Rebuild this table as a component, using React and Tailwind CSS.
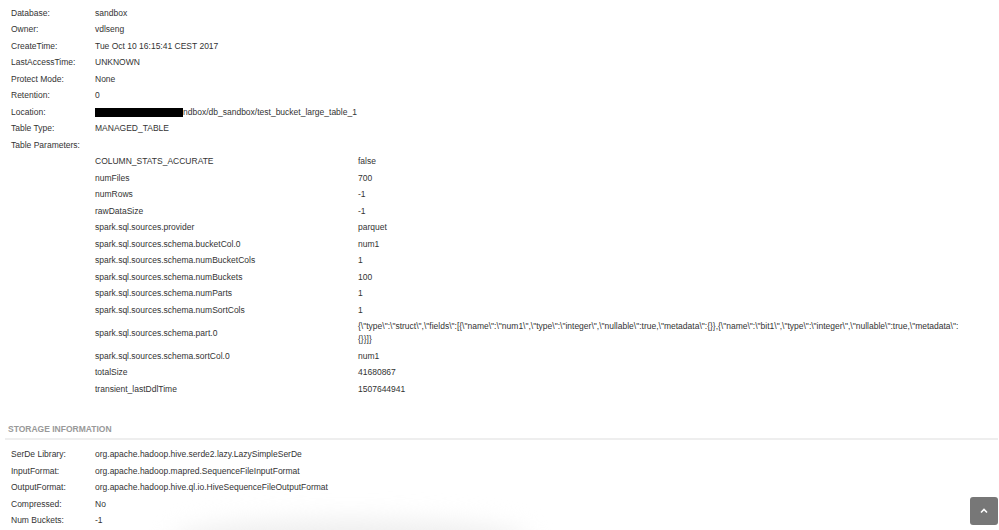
const details = [
  ["Database:", "sandbox"],
  ["Owner:", "vdlseng"],
  ["CreateTime:", "Tue Oct 10 16:15:41 CEST 2017"],
  ["LastAccessTime:", "UNKNOWN"],
  ["Protect Mode:", "None"],
  ["Retention:", "0"],
];

const schemaJson = (
  <>
    {'{\\"type\\":\\"struct\\",\\"fields\\":[{\\"name\\":\\"num1\\",\\"type\\":\\"integer\\",\\"nullable\\":true,\\"metadata\\":{}},{\\"name\\":\\"bit1\\",\\"type\\":\\"integer\\",\\"nullable\\":true,\\"metadata\\":'}
    <br />
    {"{}}]}"}
  </>
);

const params = [
  ["COLUMN_STATS_ACCURATE", "false"],
  ["numFiles", "700"],
  ["numRows", "-1"],
  ["rawDataSize", "-1"],
  ["spark.sql.sources.provider", "parquet"],
  ["spark.sql.sources.schema.bucketCol.0", "num1"],
  ["spark.sql.sources.schema.numBucketCols", "1"],
  ["spark.sql.sources.schema.numBuckets", "100"],
  ["spark.sql.sources.schema.numParts", "1"],
  ["spark.sql.sources.schema.numSortCols", "1"],
  ["spark.sql.sources.schema.part.0", schemaJson],
  ["spark.sql.sources.schema.sortCol.0", "num1"],
  ["totalSize", "41680867"],
  ["transient_lastDdlTime", "1507644941"],
];

const storage = [
  ["SerDe Library:", "org.apache.hadoop.hive.serde2.lazy.LazySimpleSerDe"],
  ["InputFormat:", "org.apache.hadoop.mapred.SequenceFileInputFormat"],
  ["OutputFormat:", "org.apache.hadoop.hive.ql.io.HiveSequenceFileOutputFormat"],
  ["Compressed:", "No"],
  ["Num Buckets:", "-1"],
];

function Row({ label, children }) {
  return (
    <tr>
      <td className="w-[84px] whitespace-nowrap py-[1.75px] align-middle">{label}</td>
      <td className="py-[1.75px] align-middle">{children}</td>
    </tr>
  );
}

export default function App() {
  return (
    <div
      className="relative h-[530px] w-[999px] overflow-hidden bg-white text-[8.5px] leading-[13px] text-[#333]"
      style={{ fontFamily: '"Liberation Sans", Arial, sans-serif' }}
    >
      <div className="pl-[11px] pt-[5px]">
        <table className="border-collapse">
          <tbody>
            {details.map(([k, v]) => (
              <Row key={k} label={k}>
                {v}
              </Row>
            ))}
            <Row label="Location:">
              <span className="flex items-center">
                <span className="inline-block h-[9px] w-[88px] bg-black" />
                <span>ndbox/db_sandbox/test_bucket_large_table_1</span>
              </span>
            </Row>
            <Row label="Table Type:">MANAGED_TABLE</Row>
            <Row label="Table Parameters:">&nbsp;</Row>
            <tr>
              <td />
              <td>
                <table className="border-collapse">
                  <tbody>
                    {params.map(([k, v]) => (
                      <tr key={k}>
                        <td className="w-[263px] whitespace-nowrap py-[1.75px] align-middle">{k}</td>
                        <td className="w-[632px] whitespace-nowrap py-[1.75px] align-middle">{v}</td>
                      </tr>
                    ))}
                  </tbody>
                </table>
              </td>
            </tr>
          </tbody>
        </table>
      </div>

      <div className="ml-[5px] mr-[1px] mt-[25px] border-b-2 border-[#eeeeee] pb-[2px] pl-[3px] text-[8.5px] font-bold uppercase text-[#999]">
        Storage Information
      </div>

      <div className="pl-[11px] pt-[7px]">
        <table className="border-collapse">
          <tbody>
            {storage.map(([k, v]) => (
              <Row key={k} label={k}>
                {v}
              </Row>
            ))}
          </tbody>
        </table>
      </div>

      <div className="pointer-events-none absolute bottom-[-30px] left-[170px] h-[40px] w-[360px] rounded-[50%] bg-[#eeeeee] blur-[12px]" />

      <button className="absolute bottom-[5px] right-[1px] flex h-[28px] w-[28px] items-center justify-center rounded-[3px] bg-[#777777]">
        <svg width="8" height="6" viewBox="0 0 8 6" fill="none">
          <path d="M1 4.5 L4 1.5 L7 4.5" stroke="white" strokeWidth="1.6" />
        </svg>
      </button>
    </div>
  );
}
